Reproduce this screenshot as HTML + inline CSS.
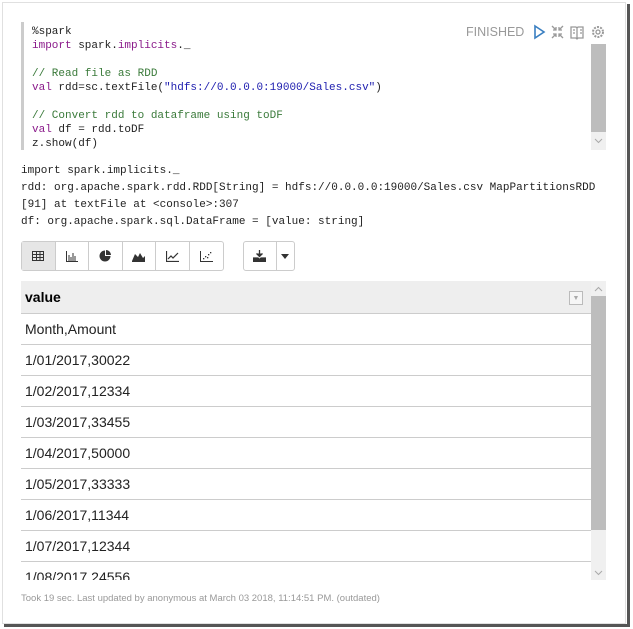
<!DOCTYPE html>
<html><head><style>
*{margin:0;padding:0;box-sizing:border-box}
body{width:633px;height:629px;background:#fff;position:relative;overflow:hidden;font-family:"Liberation Sans",sans-serif}
.card{position:absolute;left:2px;top:2px;width:624px;height:622px;border:1px solid #e0e0e0;background:#fff}
.shadow-r{position:absolute;left:627px;top:4px;width:3px;height:623px;background:#555}
.shadow-b{position:absolute;left:4px;top:624px;width:626px;height:3px;background:#555}
.mono{font-family:"Liberation Mono",monospace}
.editor{position:absolute;left:21px;top:22px;width:586px;height:128px;border-left:3px solid #ccc}
.code{position:absolute;left:8px;top:3px;font-size:11px;line-height:14px;color:#222;white-space:pre}
.kw{color:#8a1a8a}.cm{color:#3a7a3a}.st{color:#2020b0}
.sb{position:absolute;background:#f0f0f0}
.thumb{position:absolute;background:#bdbdbd}
.status{position:absolute;left:466px;top:25px;font-size:12.5px;color:#999}
.out{position:absolute;left:21px;top:163px;font-size:11px;line-height:17px;color:#222;white-space:pre}
.bg{position:absolute;top:241px;height:30px;border:1px solid #ccc;border-radius:3px;display:flex;background:#fff}
.bg div{width:34px;border-right:1px solid #ccc;display:flex;align-items:center;justify-content:center}
.bg div:last-child{border-right:none}
.tbl{position:absolute;left:21px;top:281px;width:570px}
.th{height:33px;background:#eee;border-bottom:1px solid #ccc;font-weight:bold;font-size:14px;padding:8px 4px;position:relative}
.tr{height:31px;border-bottom:1px solid #ccc;font-size:14px;padding:7px 4px;color:#222}
.foot{position:absolute;left:21px;top:593px;font-size:9.5px;color:#999}
</style></head><body>
<div class="card"></div>
<div class="shadow-r"></div><div class="shadow-b"></div>
<div class="editor">
<div class="code mono">%spark
<span class="kw">import</span> spark.<span class="kw">implicits</span>._

<span class="cm">// Read file as RDD</span>
<span class="kw">val</span> rdd=sc.textFile(<span class="st">"hdfs://0.0.0.0:19000/Sales.csv"</span>)

<span class="cm">// Convert rdd to dataframe using toDF</span>
<span class="kw">val</span> df = rdd.toDF
z.show(df)</div>
</div>
<div class="sb" style="left:591px;top:44px;width:15px;height:106px"></div>
<div class="thumb" style="left:591px;top:44px;width:15px;height:88px"></div>
<svg style="position:absolute;left:594px;top:138px" width="9" height="6"><path d="M1 1l3.5 3.5L8 1" stroke="#aaa" fill="none"/></svg>
<div class="status">FINISHED</div>
<svg style="position:absolute;left:532px;top:24px" width="80" height="16">
<path d="M3 2 L12 8 L3 14 Z" fill="none" stroke="#3a7fc1" stroke-width="1.6"/>
<g stroke="#999" stroke-width="1.3" fill="none"><path d="M20 2l4 4M24 3v3h-3M31 2l-4 4M27 3v3h3M20 14l4-4M21 10h3v3M31 14l-4-4M27 13v-3h3"/>
<path d="M39 3h5l1 1 1-1h5v11h-5l-1 1-1-1h-5zM45 4v10M41 6h2M41 9h2M48 6h2M48 9h2"/>
<circle cx="66" cy="8" r="2"/><circle cx="66" cy="8" r="5" stroke-dasharray="2 1.2" stroke-width="2"/></g>
</svg>
<div class="out mono">import spark.implicits._
rdd: org.apache.spark.rdd.RDD[String] = hdfs://0.0.0.0:19000/Sales.csv MapPartitionsRDD
[91] at textFile at &lt;console&gt;:307
df: org.apache.spark.sql.DataFrame = [value: string]</div>
<div class="bg" style="left:21px;width:203px">
<div style="background:#e6e6e6"><svg width="12" height="10"><path d="M0.5 0.5h11v9h-11zM0.5 3.5h11M0.5 6.5h11M4.5 0.5v9M8 0.5v9" stroke="#333" fill="none"/></svg></div>
<div><svg width="12" height="11"><path d="M0.5 0v10.5h11.5M3 4v6M5 6v4M7 2v8M9 5v5" stroke="#333" fill="none"/></svg></div>
<div><svg width="12" height="12"><path d="M6 6V0.5A5.5 5.5 0 1 0 11.5 6z M7 5V0A5 5 0 0 1 12 5z" fill="#333"/></svg></div>
<div><svg width="13" height="11"><path d="M0 10L3 3L6 6L8 2L11 7L13 5V10Z" fill="#333"/><path d="M0 10.5h13" stroke="#333"/></svg></div>
<div><svg width="13" height="11"><path d="M0.5 0v10.5h12.5M2 8l3-3 2 2 5-5" stroke="#333" fill="none" stroke-width="1.2"/></svg></div>
<div><svg width="13" height="11"><path d="M0.5 0v10.5h12.5" stroke="#333" fill="none"/><g fill="#333"><rect x="3" y="7" width="1.3" height="1.3"/><rect x="5" y="5" width="1.3" height="1.3"/><rect x="7" y="6" width="1.3" height="1.3"/><rect x="8" y="3" width="1.3" height="1.3"/><rect x="10" y="1" width="1.3" height="1.3"/></g></svg></div>
</div>
<div class="bg" style="left:243px;width:52px">
<div><svg width="13" height="12"><path d="M6.5 0v6M3.5 3.5l3 3 3-3M0 8h5l1.5 1.5L8 8h5v4H0z" stroke="#333" fill="#333" stroke-width="1.3"/></svg></div>
<div style="width:18px"><svg width="8" height="5"><path d="M0 0h8L4 5z" fill="#333"/></svg></div>
</div>
<div class="tbl">
<div class="th">value<div style="position:absolute;right:8px;top:10px;width:14px;height:14px;border:1px solid #bbb;background:#f6f6f6;font-size:7px;color:#aaa;text-align:center;line-height:13px;font-weight:normal">&#9660;</div></div>
<div class="tr">Month,Amount</div>
<div class="tr">1/01/2017,30022</div>
<div class="tr">1/02/2017,12334</div>
<div class="tr">1/03/2017,33455</div>
<div class="tr">1/04/2017,50000</div>
<div class="tr">1/05/2017,33333</div>
<div class="tr">1/06/2017,11344</div>
<div class="tr">1/07/2017,12344</div>
<div class="tr" style="height:18px;overflow:hidden;border:none">1/08/2017,24556</div>
</div>
<div class="sb" style="left:591px;top:281px;width:15px;height:299px"></div>
<div class="thumb" style="left:591px;top:296px;width:15px;height:234px"></div>
<svg style="position:absolute;left:594px;top:286px" width="9" height="6"><path d="M1 5l3.5-3.5L8 5" stroke="#aaa" fill="none"/></svg>
<svg style="position:absolute;left:594px;top:570px" width="9" height="6"><path d="M1 1l3.5 3.5L8 1" stroke="#aaa" fill="none"/></svg>
<div class="foot">Took 19 sec. Last updated by anonymous at March 03 2018, 11:14:51 PM. (outdated)</div>
</body></html>
